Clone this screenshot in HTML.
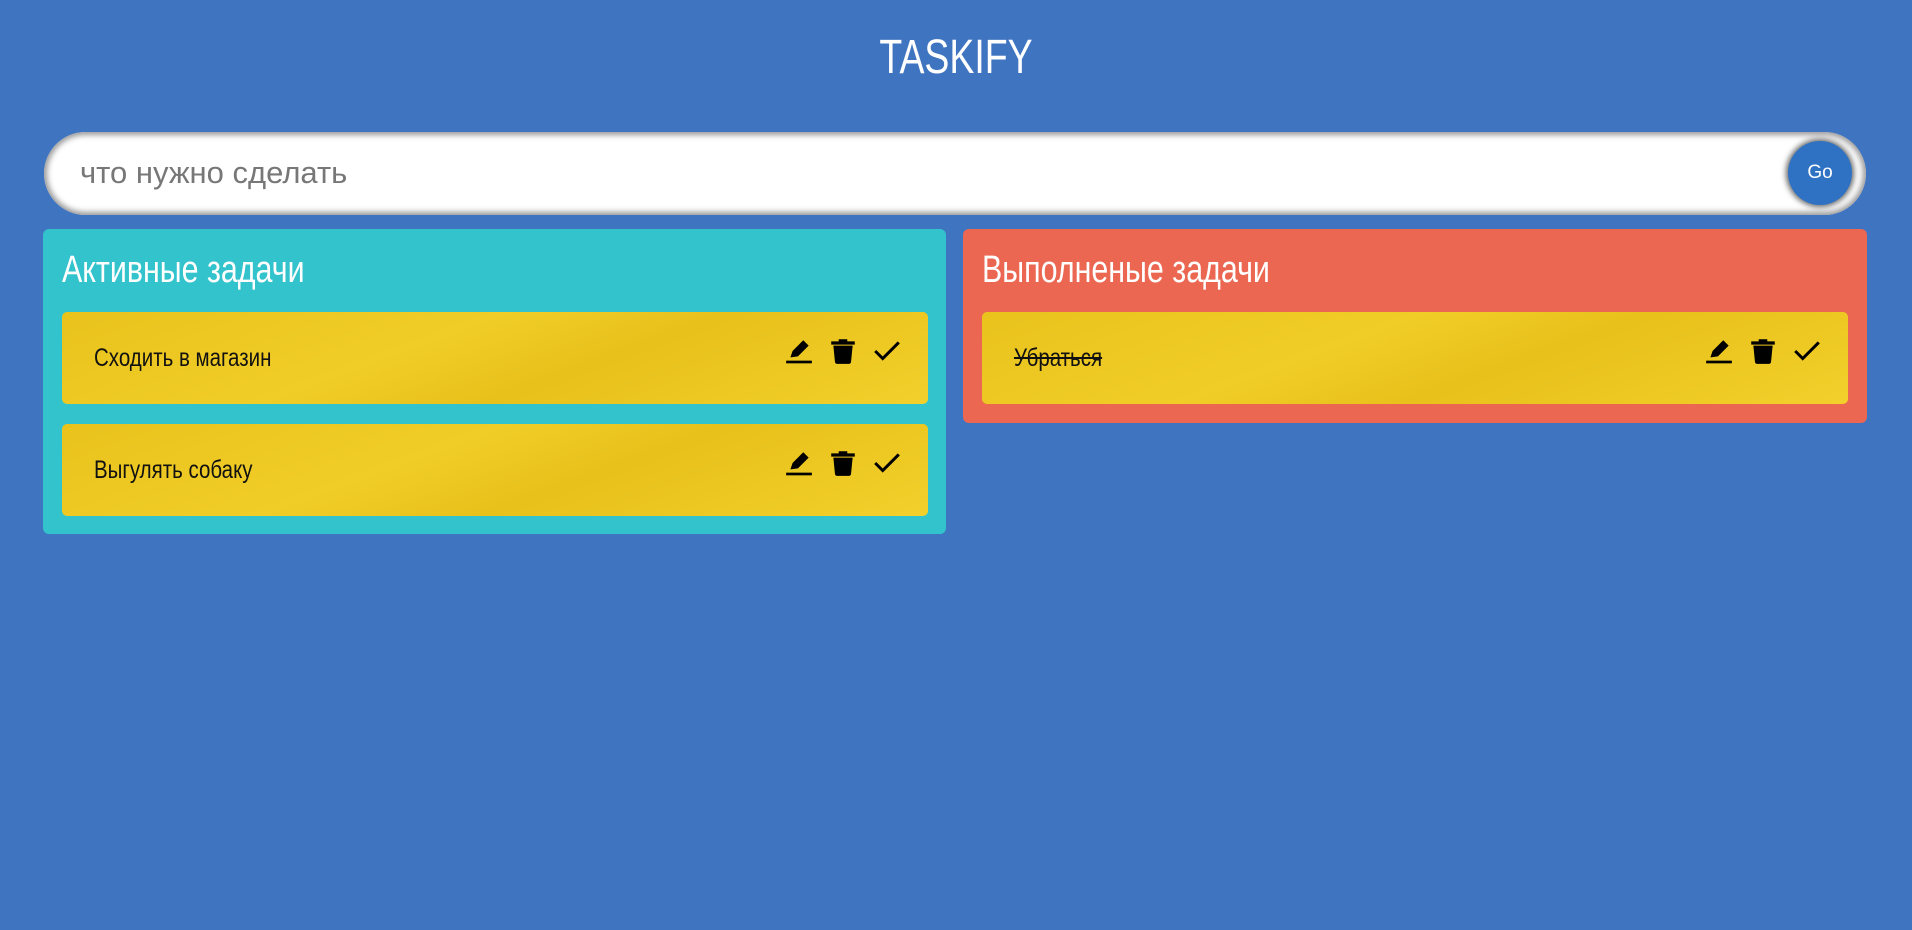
<!DOCTYPE html>
<html><head><meta charset="utf-8"><style>
*{box-sizing:border-box;margin:0;padding:0}
body{width:1912px;height:930px;background:#3f74c1;font-family:"Liberation Sans Narrow","Liberation Sans",sans-serif;position:relative;overflow:hidden}
.title{position:absolute;top:30px;left:0;width:100%;text-align:center;color:#fff;font-size:48px;transform:scaleX(.78)}
.inp{position:absolute;left:44px;top:132px;width:1822px;height:83px;border-radius:42px;background:#fff;box-shadow:inset 0 0 6px 3px #999}
.ph{position:absolute;left:36px;top:23px;font-family:"Liberation Sans",sans-serif;font-size:31px;color:#777}
.go{position:absolute;left:1744px;top:9px;width:64px;height:64px;border-radius:50%;background:#2f72c4;color:#fff;font-family:"Liberation Sans",sans-serif;font-size:19px;line-height:64px;text-align:center;box-shadow:0 0 6px 2px #666}
.panel{position:absolute;top:229px;border-radius:6px}
.panel h2{position:absolute;left:19px;top:20px;color:#fff;font-weight:normal;font-size:38px;transform:scaleX(.8);transform-origin:left}
.card{position:absolute;left:19px;width:866px;height:92px;border-radius:5px;background:linear-gradient(160deg,#e9c31c 0%,#f1cd28 40%,#e8c11a 60%,#f3d02c 100%)}
.card span{position:absolute;left:32px;top:32px;font-size:25px;color:#111;transform:scaleX(.82);transform-origin:left}
.ic{position:absolute;top:24px;width:30px;height:30px}
</style></head><body>
<div class="title">TASKIFY</div>
<div class="inp"><div class="ph">что нужно сделать</div><div class="go">Go</div></div>
<div class="panel" style="left:43px;width:903px;height:305px;background:#32c3cc">
<h2>Активные задачи</h2>
<div class="card" style="top:83px"><span>Сходить в магазин</span>ICONS</div>
<div class="card" style="top:195px"><span>Выгулять собаку</span>ICONS</div>
</div>
<div class="panel" style="left:963px;width:904px;height:194px;background:#eb6752">
<h2>Выполненые задачи</h2>
<div class="card" style="top:83px"><span style="text-decoration:line-through">Убраться</span>ICONS</div>
</div>
<script>
var ic='<svg class="ic" style="left:722px" viewBox="0 0 28 28"><path d="M6 20 L8 14 L18 4 L23 9 L13 19 Z" fill="#000"/><rect x="2" y="23" width="24" height="2.5" fill="#000"/></svg><svg class="ic" style="left:766px" viewBox="0 0 28 28"><path d="M10 3h8v2h7v3H3V5h7z" fill="#000"/><path d="M5 9h18l-1.5 15a2 2 0 0 1-2 2h-11a2 2 0 0 1-2-2z" fill="#000"/></svg><svg class="ic" style="left:810px" viewBox="0 0 28 28"><path d="M3 14 L10 21 L25 6" stroke="#000" stroke-width="2.8" fill="none"/></svg>';
document.querySelectorAll('.card').forEach(function(c){c.innerHTML=c.innerHTML.replace('ICONS',ic)});
</script>
</body></html>
